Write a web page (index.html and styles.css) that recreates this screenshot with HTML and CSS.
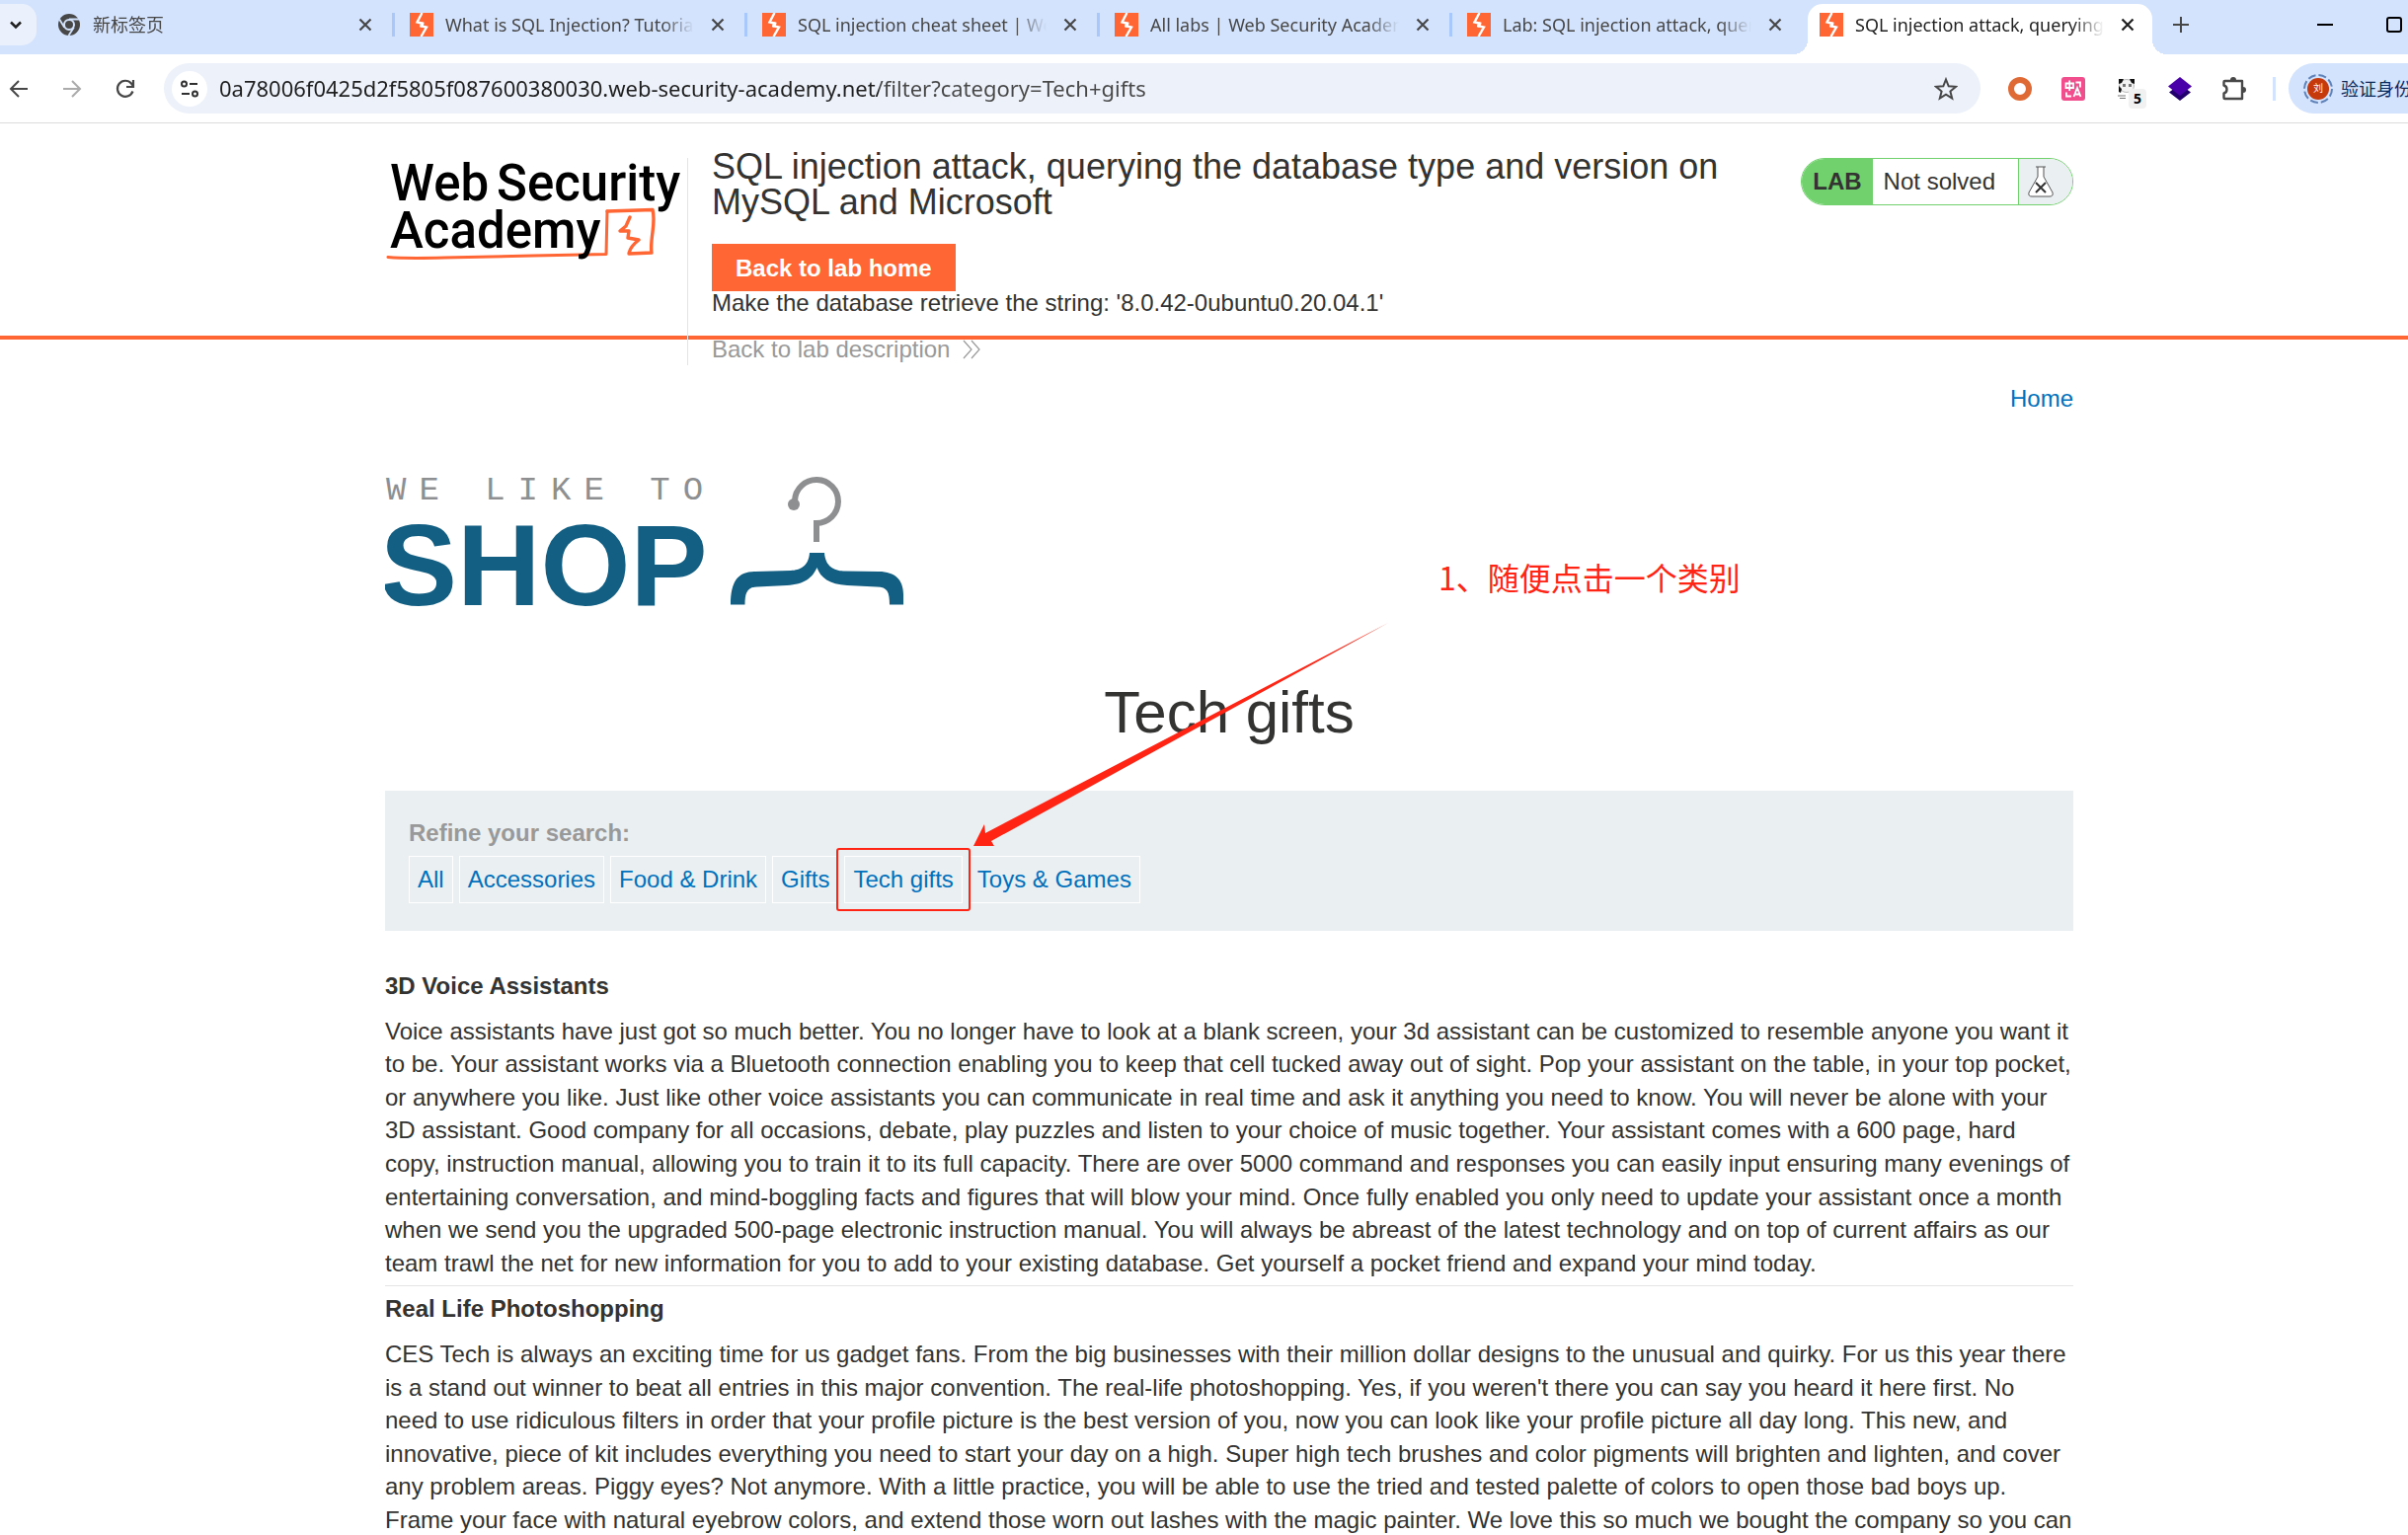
FILE: index.html
```html
<!DOCTYPE html>
<html lang="en">
<head>
<meta charset="utf-8">
<title>SQL injection attack, querying the database type and version on MySQL and Microsoft</title>
<link rel="stylesheet" href="styles.css">
</head>
<body>
<svg width="0" height="0" class="defs" aria-hidden="true">
  <symbol id="bolt" viewBox="0 0 24 24"><rect width="24" height="24" fill="#ff6633"/><path d="M12.500 0 7.500 9.500 12 10.500 11 14.500" fill="none" stroke="#fff" stroke-width="2.400"/><path d="M11.500 24 17 14.500 12.500 13.500 13.500 9.500" fill="none" stroke="#fff" stroke-width="2.400"/></symbol>
  <symbol id="close" viewBox="0 0 24 24"><path d="M6.500 6.500l11 11M17.500 6.500l-11 11" stroke="currentColor" stroke-width="2.200" fill="none"/></symbol>
</svg>

<header class="browser">
  <div class="tabstrip">
    <button class="tab-search" aria-label="Search tabs"><svg width="14" height="14" viewBox="0 0 14 14"><path d="M2 4.500l5 5 5-5" fill="none" stroke="currentColor" stroke-width="2.500"/></svg></button>
    <div class="tab">
      <svg class="favicon" viewBox="0 0 24 24"><circle cx="12" cy="12" r="11" fill="#474747"/><circle cx="12" cy="12" r="5" fill="none" stroke="#d3e3fd" stroke-width="2"/><path d="M12 6.500H22M7.200 14.800 2.200 6.500M16.800 14.800 11.500 23" stroke="#d3e3fd" stroke-width="1.800"/></svg>
      <span class="tab-title">新标签页</span>
      <button class="tab-close" aria-label="Close"><svg width="24" height="24"><use href="#close"/></svg></button>
    </div>
    <div class="tab">
      <svg class="favicon"><use href="#bolt"/></svg>
      <span class="tab-title">What is SQL Injection? Tutorial</span>
      <button class="tab-close" aria-label="Close"><svg width="24" height="24"><use href="#close"/></svg></button>
    </div>
    <div class="tab">
      <svg class="favicon"><use href="#bolt"/></svg>
      <span class="tab-title">SQL injection cheat sheet | Web</span>
      <button class="tab-close" aria-label="Close"><svg width="24" height="24"><use href="#close"/></svg></button>
    </div>
    <div class="tab">
      <svg class="favicon"><use href="#bolt"/></svg>
      <span class="tab-title">All labs | Web Security Academy</span>
      <button class="tab-close" aria-label="Close"><svg width="24" height="24"><use href="#close"/></svg></button>
    </div>
    <div class="tab">
      <svg class="favicon"><use href="#bolt"/></svg>
      <span class="tab-title">Lab: SQL injection attack, querying</span>
      <button class="tab-close" aria-label="Close"><svg width="24" height="24"><use href="#close"/></svg></button>
    </div>
    <div class="tab tab-active">
      <svg class="favicon"><use href="#bolt"/></svg>
      <span class="tab-title">SQL injection attack, querying</span>
      <button class="tab-close" aria-label="Close"><svg width="24" height="24"><use href="#close"/></svg></button>
    </div>
    <button class="new-tab" aria-label="New tab"><svg width="16" height="16" viewBox="0 0 16 16"><path d="M8 0v16M0 8h16" stroke="currentColor" stroke-width="2"/></svg></button>
    <div class="window-controls">
      <button aria-label="Minimize"><svg width="16" height="16" viewBox="0 0 16 16"><path d="M0 8h16" stroke="#000" stroke-width="2"/></svg></button>
      <button aria-label="Maximize"><svg width="16" height="16" viewBox="0 0 16 16"><rect x="1" y="1" width="14" height="14" rx="2" fill="none" stroke="#000" stroke-width="2"/></svg></button>
    </div>
  </div>

  <div class="toolbar">
    <div class="nav-buttons">
      <button aria-label="Back"><svg width="20" height="20" viewBox="0 0 20 20"><path d="M19 10H2M10 2l-8 8 8 8" fill="none" stroke="#474747" stroke-width="2"/></svg></button>
      <button aria-label="Forward"><svg width="20" height="20" viewBox="0 0 20 20"><path d="M1 10h17M10 2l8 8-8 8" fill="none" stroke="#ababab" stroke-width="2"/></svg></button>
      <button aria-label="Reload"><svg width="20" height="20" viewBox="0 0 20 20"><path d="M17.500 12.500A8 8 0 1 1 16 4.500l1.500 2" fill="none" stroke="#474747" stroke-width="2.200"/><path d="M18 1v7h-7" fill="none" stroke="#474747" stroke-width="2.200"/></svg></button>
    </div>
    <div class="omnibox">
      <button class="site-info" aria-label="Site information"><svg width="20" height="20" viewBox="0 0 20 20"><g fill="none" stroke="#303030" stroke-width="2"><circle cx="4.500" cy="5" r="2.500"/><path d="M10 5h8M2 15h8"/><circle cx="15.500" cy="15" r="2.500"/></g></svg></button>
      <input class="url" type="text" aria-label="Address" value="0a78006f0425d2f5805f087600380030.web-security-academy.net/filter?category=Tech+gifts">
      <button class="star" aria-label="Bookmark"><svg width="24" height="24" viewBox="0 0 24 24"><path d="M12 2.500l2.700 6.800 7.300.5-5.600 4.700 1.800 7.100L12 17.700l-6.200 3.900 1.800-7.100L2 9.800l7.300-.5z" fill="none" stroke="#474747" stroke-width="2"/></svg></button>
    </div>
    <div class="extensions">
      <button aria-label="Recorder"><svg width="24" height="24" viewBox="0 0 24 24"><circle cx="12" cy="12" r="9" fill="none" stroke="#e06a35" stroke-width="6"/></svg></button>
      <button aria-label="Translate"><svg width="24" height="24" viewBox="0 0 24 24"><rect width="24" height="24" rx="3" fill="#f04e8c"/><g fill="none" stroke="#fff" stroke-width="1.800"><path d="M4.500 6.500h7.500v4.500H4.500zM8.200 3.500v10.500M14.500 5.500h4.500v5M5 15.500v4h5M12.500 20l3.500-9 3.500 9M14 17.500h4.500"/></g></svg></button>
      <button class="ext-counter" aria-label="Panda reader"><svg width="24" height="24" viewBox="0 0 24 24"><ellipse cx="12" cy="9" rx="7.500" ry="6.500" fill="#f4f4f4" stroke="#bbb"/><path d="M4 2h5l-2 4-3 1zM20 2h-5l2 4 3 1zM4 9l3 3-1 4-2-1z" fill="#111"/><path d="M8 7h3v3H8zM14 7h3v3h-3z" fill="#777"/><path d="M3 19h8M5 21.500h6" stroke="#777" stroke-width="1.200"/></svg><span class="ext-count">5</span></button>
      <button aria-label="Layers"><svg width="24" height="24" viewBox="0 0 24 24"><path d="M1 15.500l4-3 7 4 7-4 4 3L12 24z" fill="#22006e"/><path d="M12 0l12 9.500L12 19 0 9.500z" fill="#4a00a8"/></svg></button>
      <button aria-label="Extensions"><svg width="26" height="26" viewBox="0 0 26 26"><path d="M3.500 5h17.500v18h-17.500q-1 0-1-1v-4.500c4-1 4-7 0-8V6q0-1 1-1z" fill="none" stroke="#474747" stroke-width="2.400" stroke-linejoin="round"/><path d="M9 4a3 3 0 0 1 6 0zM22 11a3 3 0 0 1 0 6z" fill="#474747"/></svg></button>
    </div>
    <button class="profile"><svg class="avatar" width="30" height="30" viewBox="0 0 30 30"><circle cx="15" cy="15" r="14" fill="none" stroke="#5f82b8" stroke-width="2" stroke-dasharray="8 3"/><circle cx="15" cy="15" r="11" fill="#c5390c"/><text x="15" y="18" text-anchor="middle" class="avatar-text">刘</text></svg><span>验证身份</span></button>
  </div>
</header>

<div class="page">
  <section class="lab-header">
    <div class="lab-inner">
      <a class="wsa-logo" href="#" aria-label="Web Security Academy">
        <svg width="302" height="110" viewBox="0 0 302 110">
          <g fill="none" stroke="#ff6633" stroke-linecap="round" stroke-linejoin="round">
            <path d="M3 100.500Q20 102 60 101T150 99T224 97.500L225 54" stroke-width="3"/>
            <path d="M225 54L271 52.500Q273 60 271 75T270 96L247 97Q248 90 257 83L246 81 247 74 238 74 244 69 248 60" stroke-width="3.400"/>
          </g>
          <g class="wsa-text"><text x="5" y="43">Web</text><text x="113" y="43">Security</text><text x="5" y="91">Academy</text></g>
        </svg>
      </a>
      <span class="rule"></span>
      <div class="lab-title">
        <h2>SQL injection attack, querying the database type and version on MySQL and Microsoft</h2>
        <a class="btn-home" href="#">Back to lab home</a>
        <p>Make the database retrieve the string: '8.0.42-0ubuntu0.20.04.1'</p>
        <a class="link-back" href="#">Back to lab description<svg width="18" height="20" viewBox="0 0 18 20"><path d="M1 1l8 9-8 9M9 1l8 9-8 9" fill="none" stroke="#999" stroke-width="1.200"/></svg></a>
      </div>
      <div class="lab-status">
        <strong>LAB</strong>
        <span class="status-text">Not solved</span>
        <span class="status-icon"><svg width="26" height="32" viewBox="0 0 26 32"><path d="M8 1h10M10 1v10L1 27q-1 4 3 4h18q4 0 3-4L16 11V1" fill="#fff" stroke="#555" stroke-width="1"/><path d="M8 17l10 10M18 17L8 27" stroke="#333" stroke-width="2"/></svg></span>
      </div>
    </div>
  </section>

  <main class="shop">
    <nav class="top-links"><a href="#">Home</a></nav>
    <svg class="shop-logo" width="530" height="136" viewBox="0 0 530 136" role="img" aria-label="We like to shop">
      <text class="shop-small" x="1" y="26">WE LIKE TO</text>
      <text class="shop-big" x="-5" y="133">SHOP</text>
      <path d="M415 27A22 22 0 1 1 437 50V69" fill="none" stroke="#8e8f91" stroke-width="6"/>
      <circle cx="414" cy="31" r="6" fill="#8e8f91"/>
      <path d="M430 80H445C446 94 455 98 464 98.500L500 99C517 99 525 108 525 122V132.500H511C511 120 509 114.500 498 114.500L468 113C450 112 441 105 437.500 95C433 105 425 112 407 113L377 114.500C367 114.500 364.500 120 364.500 132.500H350C350 108 358 99 375 99L411 98C420 97.500 429 94 430 80Z" fill="#125f83"/>
    </svg>
    <h1>Tech gifts</h1>

    <section class="filters">
      <span class="filters-label">Refine your search:</span>
      <div class="filter-list">
        <a href="#">All</a>
        <a href="#">Accessories</a>
        <a href="#">Food &amp; Drink</a>
        <a href="#">Gifts</a>
        <a href="#" class="marked">Tech gifts</a>
        <a href="#">Toys &amp; Games</a>
      </div>
    </section>

    <article class="product">
      <h3>3D Voice Assistants</h3>
      <p>Voice assistants have just got so much better. You no longer have to look at a blank screen, your 3d assistant can be customized to resemble anyone you want it to be. Your assistant works via a Bluetooth connection enabling you to keep that cell tucked away out of sight. Pop your assistant on the table, in your top pocket, or anywhere you like. Just like other voice assistants you can communicate in real time and ask it anything you need to know. You will never be alone with your 3D assistant. Good company for all occasions, debate, play puzzles and listen to your choice of music together. Your assistant comes with a 600 page, hard copy, instruction manual, allowing you to train it to its full capacity. There are over 5000 command and responses you can easily input ensuring many evenings of entertaining conversation, and mind-boggling facts and figures that will blow your mind. Once fully enabled you only need to update your assistant once a month when we send you the upgraded 500-page electronic instruction manual. You will always be abreast of the latest technology and on top of current affairs as our team trawl the net for new information for you to add to your existing database. Get yourself a pocket friend and expand your mind today.</p>
    </article>
    <article class="product">
      <h3>Real Life Photoshopping</h3>
      <p>CES Tech is always an exciting time for us gadget fans. From the big businesses with their million dollar designs to the unusual and quirky. For us this year there is a stand out winner to beat all entries in this major convention. The real-life photoshopping. Yes, if you weren't there you can say you heard it here first. No need to use ridiculous filters in order that your profile picture is the best version of you, now you can look like your profile picture all day long. This new, and innovative, piece of kit includes everything you need to start your day on a high. Super high tech brushes and color pigments will brighten and lighten, and cover any problem areas. Piggy eyes? Not anymore. With a little practice, you will be able to use the tried and tested palette of colors to open those bad boys up. Frame your face with natural eyebrow colors, and extend those worn out lashes with the magic painter. We love this so much we bought the company so you can</p>
    </article>

    <p class="note">1、随便点击一个类别</p>
    <svg class="arrow" width="426" height="230" viewBox="0 0 426 230" aria-hidden="true"><path d="M0 226L11 204 12 213 420 0 18 221 21 226Z" fill="#ff2414"/></svg>
  </main>
</div>
</body>
</html>
```
FILE: styles.css
```css
* { box-sizing: border-box; }
body {
  margin: 0;
  height: 100vh;
  overflow: hidden;
  background: #fff;
  color: #333332;
  font: 24px/1.4 "Liberation Sans", Arial, sans-serif;
}
h1, h2, h3, p { margin: 0; }
a { color: #0071bd; text-decoration: none; }
svg { display: block; flex: none; }
button { border: 0; padding: 0; background: none; color: #474747; font: inherit; }
.defs { position: absolute; }

/* Browser frame */
.browser {
  border-bottom: 1px solid #dcdcdc;
  font: 18px/24px "Noto Sans", "Noto Sans CJK SC", sans-serif;
}
.tabstrip {
  display: flex;
  height: 55px;
  padding-top: 4px;
  background: #d3e3fd;
}
.tab-search {
  display: flex;
  align-items: center;
  justify-content: center;
  width: 37px;
  height: 42px;
  margin-right: 5px;
  padding-right: 5px;
  border-radius: 0 15px 15px 0;
  background: #ebf1fc;
  color: #1f1f1f;
}
.tab {
  position: relative;
  display: flex;
  flex: 0 1 357px;
  gap: 12px;
  height: 51px;
  padding: 9px 17px 0 16px;
  min-width: 0;
  color: #474747;
}
.tab:not(.tab-active)::after {
  content: "";
  position: absolute;
  right: -1px;
  top: 9px;
  width: 3px;
  height: 24px;
  background: #a8c7fa;
}
.tab:nth-child(6)::after { display: none; }
.favicon { width: 24px; height: 24px; }
.tab-title {
  flex: 1;
  overflow: hidden;
  white-space: nowrap;
  -webkit-mask-image: linear-gradient(90deg, #000 calc(100% - 32px), transparent);
  mask-image: linear-gradient(90deg, #000 calc(100% - 32px), transparent);
}
.tab-close { height: 24px; color: inherit; }
.tab-active { color: #1f1f1f; }
.tab-active > * { position: relative; }
.tab-active::before {
  content: "";
  position: absolute;
  inset: 0 4px;
  border-radius: 15px 15px 0 0;
  background: #fff;
}
.tab-active::after {
  content: "";
  position: absolute;
  left: -11px;
  right: -11px;
  bottom: 0;
  height: 15px;
  background:
    radial-gradient(circle at 0 0, transparent 15px, #fff 15px) left / 15px 15px no-repeat,
    radial-gradient(circle at 100% 0, transparent 15px, #fff 15px) right / 15px 15px no-repeat;
}
.new-tab { display: flex; align-items: center; height: 42px; margin-left: 17px; }
.window-controls {
  display: flex;
  align-items: center;
  gap: 54px;
  height: 42px;
  margin-left: auto;
  padding-right: 6px;
}

.toolbar {
  display: flex;
  align-items: center;
  height: 69px;
  padding-left: 9px;
}
.nav-buttons { display: flex; gap: 34px; }
.omnibox {
  display: flex;
  align-items: center;
  flex: 1;
  height: 51px;
  margin-left: 29px;
  padding: 0 23px 0 8px;
  border-radius: 26px;
  background: #ecf1fa;
}
.site-info {
  display: flex;
  align-items: center;
  justify-content: center;
  width: 36px;
  height: 36px;
  border-radius: 50%;
  background: #fff;
}
.url {
  flex: 1;
  height: 36px;
  margin-left: 12px;
  padding: 0 0 2px;
  border: 0;
  outline: 0;
  font: 22px/34px "Noto Sans", sans-serif;
  color: transparent;
  background: linear-gradient(90deg, #1f1f1f 668px, #474747 668px);
  -webkit-background-clip: text;
  background-clip: text;
}
.extensions {
  display: flex;
  align-items: center;
  gap: 30px;
  padding: 0 26px 0 28px;
  border-right: 3px solid #d3e3fd;
  height: 24px;
}
.ext-counter { position: relative; }
.ext-count {
  position: absolute;
  left: 14px;
  top: 12px;
  width: 18px;
  height: 20px;
  border-radius: 4px;
  background: #f1f1f1;
  color: #000;
  font: bold 14px/20px "Noto Sans", sans-serif;
}
.profile {
  display: flex;
  align-items: center;
  gap: 8px;
  flex: 0 0 121px;
  height: 51px;
  margin-left: 13px;
  padding-left: 15px;
  overflow: hidden;
  border-radius: 26px 0 0 26px;
  background: #d3e3fd;
  color: #0b2a5b;
  white-space: nowrap;
}
.avatar-text { font-size: 10px; fill: #fff; }

/* Lab banner: its columns run past the orange line */
.lab-header { height: 219px; border-bottom: 4px solid #ff6633; }
.lab-inner {
  display: flex;
  margin: 0 339px 0 390px;
  padding-top: 26px;
}
.wsa-logo { flex: 0 0 306px; margin-top: 9px; }
.wsa-text { font: 500 51px Roboto, sans-serif; fill: #000; }
.rule { width: 1px; margin-top: 9px; background: #e4e4e4; }
.lab-title { flex: 1; padding: 0 24px 4px; line-height: 24px; }
.lab-title h2 { font-size: 36px; line-height: 36px; font-weight: 400; }
.btn-home {
  display: block;
  width: fit-content;
  margin-top: 24px;
  padding: 13px 24px 11px;
  background: #ff6633;
  color: #fff;
  font-weight: 700;
}
.link-back {
  display: flex;
  align-items: center;
  gap: 13px;
  margin-top: 23px;
  color: #999;
}
.lab-status {
  display: flex;
  height: 48px;
  margin-top: 9px;
  overflow: hidden;
  border: 1px solid #71d16d;
  border-radius: 24px;
  line-height: 46px;
}
.lab-status strong { padding: 0 11px; background: #71d16d; }
.status-text { padding: 0 23px 0 11px; }
.status-icon {
  display: flex;
  align-items: center;
  width: 55px;
  padding-left: 9px;
  border-left: 1px solid #71d16d;
  background: #eaeff2;
}

/* Shop page */
.shop {
  position: relative;
  margin: 0 339px 0 390px;
  padding-top: 43px;
}
.top-links { line-height: 34px; text-align: right; }
.shop-logo { margin-top: 59px; }
.shop-small { font: 34px "Liberation Mono", monospace; letter-spacing: 13px; fill: #8e8f91; }
.shop-big { font: bold 117px "Liberation Sans", sans-serif; fill: #125f83; }
.shop h1 {
  margin-top: 76px;
  font-size: 60px;
  line-height: 60px;
  font-weight: 400;
  text-align: center;
}
.filters {
  margin: 49px 0 39px;
  padding: 26px 24px 28px;
  background: #eaeff2;
}
.filters-label {
  display: block;
  margin-bottom: 6px;
  line-height: 34px;
  font-weight: 700;
  color: #999;
}
.filter-list { display: flex; gap: 6px; }
.filter-list a {
  position: relative;
  padding: 0 8px;
  border: 1px solid #fff;
  line-height: 46px;
}
.marked::after {
  content: "";
  position: absolute;
  inset: -9px;
  z-index: 1;
  border: 2px solid #ff2414;
  border-radius: 3px;
}
.product h3 { margin-bottom: 12px; font-size: 24px; font-weight: 700; }
.product + .product { margin-top: 6px; padding-top: 6px; border-top: 1px solid #e4e4e4; }

/* Hand-drawn callout over the page */
.note {
  position: absolute;
  left: 1067px;
  top: 216px;
  color: #ff2414;
  font: 32px/48px "Noto Sans CJK SC", sans-serif;
}
.arrow { position: absolute; left: 596px; top: 287px; }
```
